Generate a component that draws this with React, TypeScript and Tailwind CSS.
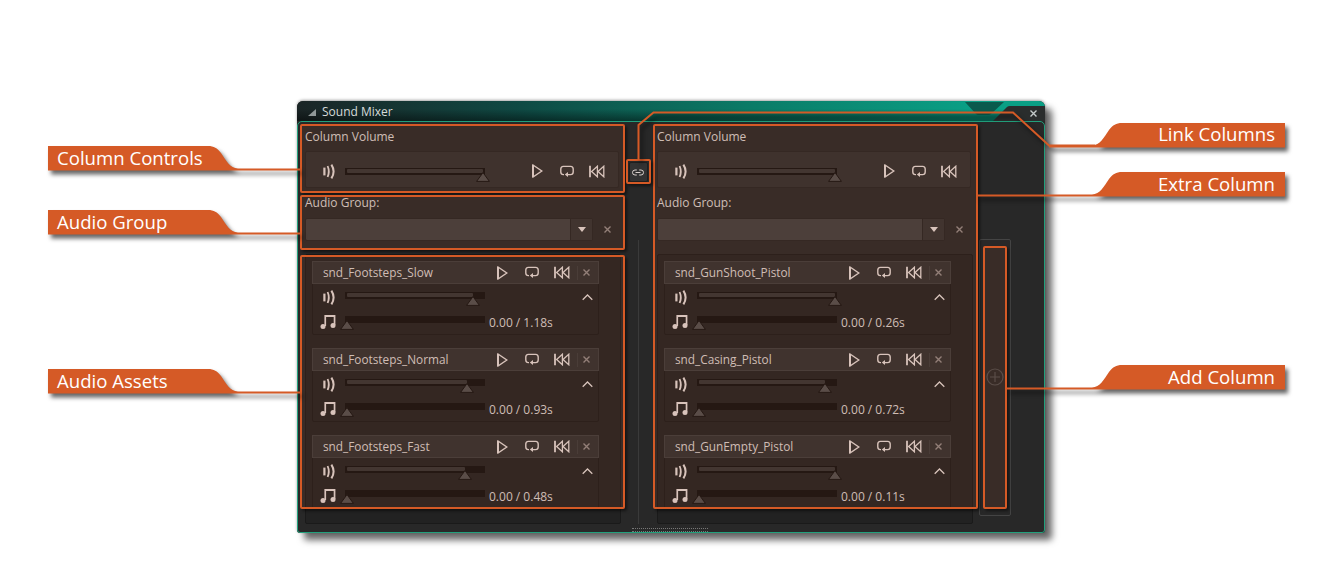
import React from "react";

const ink = "#d9d0cc";

function Speaker({ color = ink }: { color?: string }) {
  return (
    <svg width="13" height="15" viewBox="0 0 13 15" fill="none" stroke={color} strokeWidth="1.8" className="shrink-0">
      <path d="M1.4 3.6v7.8" strokeWidth="2.2" />
      <path d="M4.6 2q2.4 5.5 0 11" />
      <path d="M8.4.6q4.4 6.9 0 13.8" strokeWidth="2" />
    </svg>
  );
}
function Play() {
  return (
    <svg width="11" height="14" viewBox="0 0 11 14" fill="none" stroke={ink} className="shrink-0">
      <path d="M1 1l8.8 6L1 13z" strokeWidth="1.4" />
      <path d="M1 1v12" strokeWidth="2" />
    </svg>
  );
}
function Loop() {
  return (
    <svg width="14" height="13" viewBox="0 0 14 13" fill="none" stroke={ink} strokeWidth="1.4" className="shrink-0">
      <path d="M4 9.6H3.4A2.7 2.7 0 0 1 .8 7V4.1A2.7 2.7 0 0 1 3.4 1.4h7.2a2.7 2.7 0 0 1 2.6 2.7V7a2.7 2.7 0 0 1-2.6 2.6H7" />
      <path d="M8 7v5L4.8 9.5z" fill={ink} stroke="none" />
    </svg>
  );
}
function Rewind() {
  return (
    <svg width="16" height="13" viewBox="0 0 16 13" fill="none" stroke={ink} strokeWidth="1.3" className="shrink-0">
      <path d="M1 .8v11.4" strokeWidth="1.8" />
      <path d="M8.4 1.2L2.6 6.5l5.8 5.3z" />
      <path d="M14.8 1.2L9 6.5l5.8 5.3z" />
    </svg>
  );
}
function Note() {
  return (
    <svg width="16" height="15" viewBox="0 0 16 15" fill={ink} className="shrink-0">
      <path d="M4.4 1h11v1.9H6.1V12H4.4zM13.7 2h1.7v9h-1.7z" />
      <circle cx="3" cy="12.4" r="2.5" />
      <circle cx="13" cy="11.4" r="2.5" />
    </svg>
  );
}
function Cross({ color = "#8c8482" }: { color?: string }) {
  return (
    <svg width="7" height="7" viewBox="0 0 7 7" stroke={color} strokeWidth="1.4" className="shrink-0">
      <path d="M.5.5l6 6M6.5.5l-6 6" />
    </svg>
  );
}
function Chevron() {
  return (
    <svg width="11" height="7" viewBox="0 0 11 7" fill="none" stroke={ink} strokeWidth="1.3" className="shrink-0">
      <path d="M.7 5.8L5.5 1l4.8 4.8" />
    </svg>
  );
}

function Slider({ at, fill = true }: { at: number; fill?: boolean }) {
  return (
    <div className="relative w-[140px] shrink-0 h-[7px] bg-[#111111] border border-[#111111]">
      {fill && <div className="h-[4px] ml-[1px] bg-[#333333] rounded-[1px]" style={{ width: at - 2 }} />}
      <svg width="14" height="10" viewBox="0 0 14 10" className="absolute top-[3px]" style={{ left: at - 8 }}>
        <path d="M7 .6L13.4 9.4H.6z" fill="#4c4c4c" stroke="#121212" />
      </svg>
    </div>
  );
}

type Asset = { name: string; vol: number; time: string };

function Card({ a }: { a: Asset }) {
  return (
    <div className="w-[287px] h-[74px] shrink-0 border border-[#1a1a1a] rounded-[2px]">
      <div className="h-[23px] bg-[#2f2f2f] border border-[#3c3c3c] -m-px mb-0 flex items-center pl-[10px] text-[#cfc8c5]">
        <span className="w-[174px] shrink-0 text-[11.8px] -mt-[2px]">{a.name}</span>
        <Play />
        <span className="w-[17px]" />
        <Loop />
        <span className="w-[15px]" />
        <Rewind />
        <span className="ml-[7px] mr-[5px] w-px h-[14px] bg-[#3a3a3a]" />
        <Cross />
      </div>
      <div className="h-[26px] flex items-center pl-[10px] pt-[1px]">
        <Speaker />
        <span className="w-[9px]" />
        <div className="-mt-[5px]"><Slider at={a.vol} /></div>
        <span className="ml-[97px]"><Chevron /></span>
      </div>
      <div className="h-[23px] flex items-center pl-[7px] text-[#cfc8c5]">
        <Note />
        <span className="w-[9px]" />
        <div className="-mt-[4px]"><Slider at={2} fill={false} /></div>
        <span className="ml-[4px] mt-[2px]">{a.time}</span>
      </div>
    </div>
  );
}

function Column({ assets }: { assets: Asset[] }) {
  return (
    <div className="w-[324px] shrink-0 px-[5px]">
      <div className="h-[27px] flex items-center pb-[1px] text-[#cfc8c5]">Column Volume</div>
      <div className="w-[314px] h-[37px] bg-[#2e2e2e] border border-[#232323] rounded-[2px] flex items-center pl-[17px] pt-[3px]">
        <Speaker />
        <span className="w-[9px]" />
        <Slider at={138} />
        <span className="ml-[47px]"><Play /></span>
        <span className="w-[17px]" />
        <Loop />
        <span className="w-[15px]" />
        <Rewind />
      </div>
      <div className="h-[30px] flex items-center text-[#cfc8c5]">Audio Group:</div>
      <div className="flex items-center">
        <div className="w-[288px] h-[23px] flex bg-[#3d3d3d] border border-[#232323] rounded-[2px]">
          <div className="flex-1" />
          <div className="w-[22px] bg-[#303030] border-l border-[#232323] flex items-center justify-center">
            <svg width="8" height="5" viewBox="0 0 8 5" fill={ink}><path d="M0 0h8L4 5z" /></svg>
          </div>
        </div>
        <span className="ml-[11px]"><Cross /></span>
      </div>
      <div className="mt-[13px] w-[316px] h-[270px] border border-[#1a1a1a] rounded-[2px] bg-[#222222]">
        <div className="h-[254px] overflow-hidden pt-[6px] pl-[6px] flex flex-col gap-[13px]">
          {assets.map((a) => <Card key={a.name} a={a} />)}
        </div>
      </div>
    </div>
  );
}

const left: Asset[] = [
  { name: "snd_Footsteps_Slow", vol: 128, time: "0.00 / 1.18s" },
  { name: "snd_Footsteps_Normal", vol: 122, time: "0.00 / 0.93s" },
  { name: "snd_Footsteps_Fast", vol: 120, time: "0.00 / 0.48s" },
];
const right: Asset[] = [
  { name: "snd_GunShoot_Pistol", vol: 138, time: "0.00 / 0.26s" },
  { name: "snd_Casing_Pistol", vol: 128, time: "0.00 / 0.72s" },
  { name: "snd_GunEmpty_Pistol", vol: 138, time: "0.00 / 0.11s" },
];

const hl = "absolute border-2 border-[#d55a26] rounded-[2px] bg-[#d55a26]/10 shadow-[2px_2px_3px_rgba(0,0,0,0.5)]";
const label = "absolute text-white text-[18.6px] leading-[25px] h-[25px] whitespace-nowrap";

function leftShape(y: number) {
  return `M48 ${y}H208c6 0 9 2 13 7c5 7 9 15.5 17 15.5H300v2H48z`;
}
function rightShape(y: number, x2: number) {
  return `M1285 ${y}H1122c-6 0-9 2-13 7c-5 7-9 15.5-17 15.5H${x2}v2H1285z`;
}

export default function App() {
  return (
    <div className="relative w-[1342px] h-[587px] bg-white pt-[101px] overflow-hidden font-['Open_Sans','Noto_Sans',sans-serif] text-[12px] leading-[16px]">
      <div className="ml-[297px] w-[748px] h-[432px] flex flex-col rounded-t-[6px] rounded-b-[3px] shadow-[7px_7px_7px_rgba(0,0,0,0.6),0_-1px_3px_rgba(0,0,0,0.35)] bg-[#282828]">
        <div className="relative h-[20px] shrink-0 rounded-t-[6px] overflow-hidden bg-[linear-gradient(90deg,#1b2526_0%,#0f4a44_30%,#0b7a66_60%,#0a9f85_90%)] flex items-center pl-[11px] pt-[2px] text-[#d6dad9]">
          <div className="absolute inset-0 bg-[linear-gradient(180deg,rgba(0,0,0,0)_40%,rgba(0,0,0,0.45)_100%)]" />
          <svg width="748" height="20" viewBox="0 0 748 20" className="absolute left-0 top-0">
            <path d="M668 1h39l-13 12q-1 1-3 1h-9q-2 0-3-1z" fill="#0b5a4d" />
            <path d="M696 20l14-14q1-1 3-1h35v15z" fill="#2a2d2d" />
          </svg>
          <svg width="8" height="7" viewBox="0 0 8 7" fill="#8f9898" className="relative"><path d="M8 0v7H0z" /></svg>
          <span className="relative ml-[6px]">Sound Mixer</span>
          <span className="absolute right-[8px] top-[9px]"><Cross color="#c4caca" /></span>
        </div>
        <div className="relative h-[412px] border border-[#22a07c] rounded-t-[5px] rounded-b-[3px] bg-[#282828] pl-[2px] pt-[2px] flex">
          <Column assets={left} />
          <div className="w-[28px] shrink-0 flex flex-col items-center">
            <div className="mt-[38px] w-[19px] h-[20px] bg-[#333333] border border-[#1f1f1f] rounded-[2px] flex items-center justify-center">
              <svg width="12" height="7" viewBox="0 0 12 7" fill="none" stroke={ink} strokeWidth="1">
                <path d="M4.8 1H3a2.5 2.5 0 0 0 0 5h1.8M7.2 1H9a2.5 2.5 0 0 1 0 5H7.2M3.5 3.5h5" />
              </svg>
            </div>
            <div className="mt-[58px] w-px h-[284px] bg-[#3a3a3a]" />
          </div>
          <Column assets={right} />
          <div className="ml-[3px] mt-[115px] w-[32px] h-[277px] border border-[#444444] rounded-[2px] flex items-center justify-center pb-[2px]">
            <svg width="18" height="18" viewBox="0 0 18 18" fill="none" stroke="#4c4c4c" strokeWidth="1.2">
              <circle cx="9" cy="9" r="8" />
              <path d="M9 4v10M4 9h10" />
            </svg>
          </div>
          <div className="absolute left-[334px] bottom-0 w-[76px] h-[4px] border-y border-dotted border-[#777777]" />
        </div>
      </div>

      <div className={`${hl} left-[300px] top-[124px] w-[325px] h-[69px]`} />
      <div className={`${hl} left-[300px] top-[195px] w-[325px] h-[55px]`} />
      <div className={`${hl} left-[300px] top-[255px] w-[325px] h-[254px]`} />
      <div className={`${hl} left-[653px] top-[124px] w-[325px] h-[385px]`} />
      <div className={`${hl} left-[983px] top-[246px] w-[24px] h-[263px]`} />
      <div className="absolute left-[626px] top-[159px] w-[25px] h-[25px] border-2 border-[#d55a26] rounded-[2px] shadow-[2px_2px_3px_rgba(0,0,0,0.5)]" />

      <svg width="1342" height="587" viewBox="0 0 1342 587" className="absolute left-0 top-0 drop-shadow-[3px_4px_2px_rgba(0,0,0,0.6)]">
        <g fill="#d55a26">
          <path d={leftShape(146)} />
          <path d={leftShape(210)} />
          <path d={leftShape(369)} />
          <path d={rightShape(123, 1049)} />
          <path d={rightShape(172, 977)} />
          <path d={rightShape(365, 1007)} />
        </g>
        <path d="M1095 145.5H1049L1013 112.5H653.5L638.5 125V160" fill="none" stroke="#d55a26" strokeWidth="2" />
      </svg>

      <span className={`${label} left-[57px] top-[145px]`}>Column Controls</span>
      <span className={`${label} left-[57px] top-[209px]`}>Audio Group</span>
      <span className={`${label} left-[57px] top-[368px]`}>Audio Assets</span>
      <span className={`${label} right-[67px] top-[121px]`}>Link Columns</span>
      <span className={`${label} right-[67px] top-[171px]`}>Extra Column</span>
      <span className={`${label} right-[67px] top-[364px]`}>Add Column</span>
    </div>
  );
}
